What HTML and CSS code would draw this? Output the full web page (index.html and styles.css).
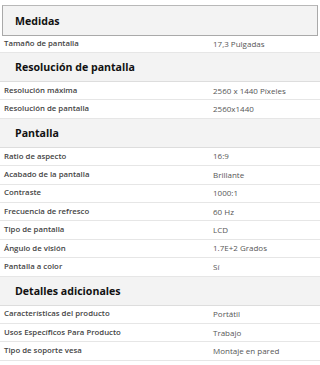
FILE: index.html
```html
<!DOCTYPE html>
<html lang="es">
<head>
<meta charset="utf-8">
<link rel="stylesheet" href="styles.css">
</head>
<body>
<div class="specs">
  <section class="group first">
    <h2 class="group-title">Medidas</h2>
    <div class="row"><span class="label">Tamaño de pantalla</span><span class="value">17,3 Pulgadas</span></div>
  </section>
  <section class="group">
    <h2 class="group-title">Resolución de pantalla</h2>
    <div class="row"><span class="label">Resolución máxima</span><span class="value">2560 x 1440 Píxeles</span></div>
    <div class="row"><span class="label">Resolución de pantalla</span><span class="value">2560x1440</span></div>
  </section>
  <section class="group">
    <h2 class="group-title">Pantalla</h2>
    <div class="row"><span class="label">Ratio de aspecto</span><span class="value">16:9</span></div>
    <div class="row"><span class="label">Acabado de la pantalla</span><span class="value">Brillante</span></div>
    <div class="row"><span class="label">Contraste</span><span class="value">1000:1</span></div>
    <div class="row"><span class="label">Frecuencia de refresco</span><span class="value">60 Hz</span></div>
    <div class="row"><span class="label">Tipo de pantalla</span><span class="value">LCD</span></div>
    <div class="row"><span class="label">Ángulo de visión</span><span class="value">1.7E+2 Grados</span></div>
    <div class="row"><span class="label">Pantalla a color</span><span class="value">Sí</span></div>
  </section>
  <section class="group">
    <h2 class="group-title">Detalles adicionales</h2>
    <div class="row"><span class="label">Características del producto</span><span class="value">Portátil</span></div>
    <div class="row"><span class="label">Usos Específicos Para Producto</span><span class="value">Trabajo</span></div>
    <div class="row"><span class="label">Tipo de soporte vesa</span><span class="value">Montaje en pared</span></div>
  </section>
</div>
</body>
</html>
```
FILE: styles.css
```css
html, body {
  margin: 0;
  padding: 0;
  background: #ffffff;
}

body {
  font-family: "Open Sans", "Noto Sans", sans-serif;
  color: #333333;
}

.specs {
  padding-top: 5px;
}

.group-title {
  margin: 0;
  height: 28px;
  display: flex;
  align-items: center;
  padding-left: 15px;
  background: #f3f3f3;
  border-bottom: 1px solid #dddddd;
  font-size: 10.6px;
  font-weight: 700;
  color: #111111;
}

.first .group-title {
  margin: 0 2px;
  height: 29px;
  padding-left: 12px;
  border: 1px solid #a9a9a9;
  border-top-color: #b8b8b8;
}

.row {
  display: grid;
  grid-template-columns: 209px 1fr;
  align-items: center;
  height: 17.4px;
  padding-left: 4px;
  border-bottom: 1px solid #e6e6e6;
  font-size: 7.8px;
  line-height: 1;
}

.first .row {
  height: 16px;
}

.label {
  font-weight: 600;
  color: #444444;
}

.value {
  font-size: 8px;
  color: #565656;
}
```
